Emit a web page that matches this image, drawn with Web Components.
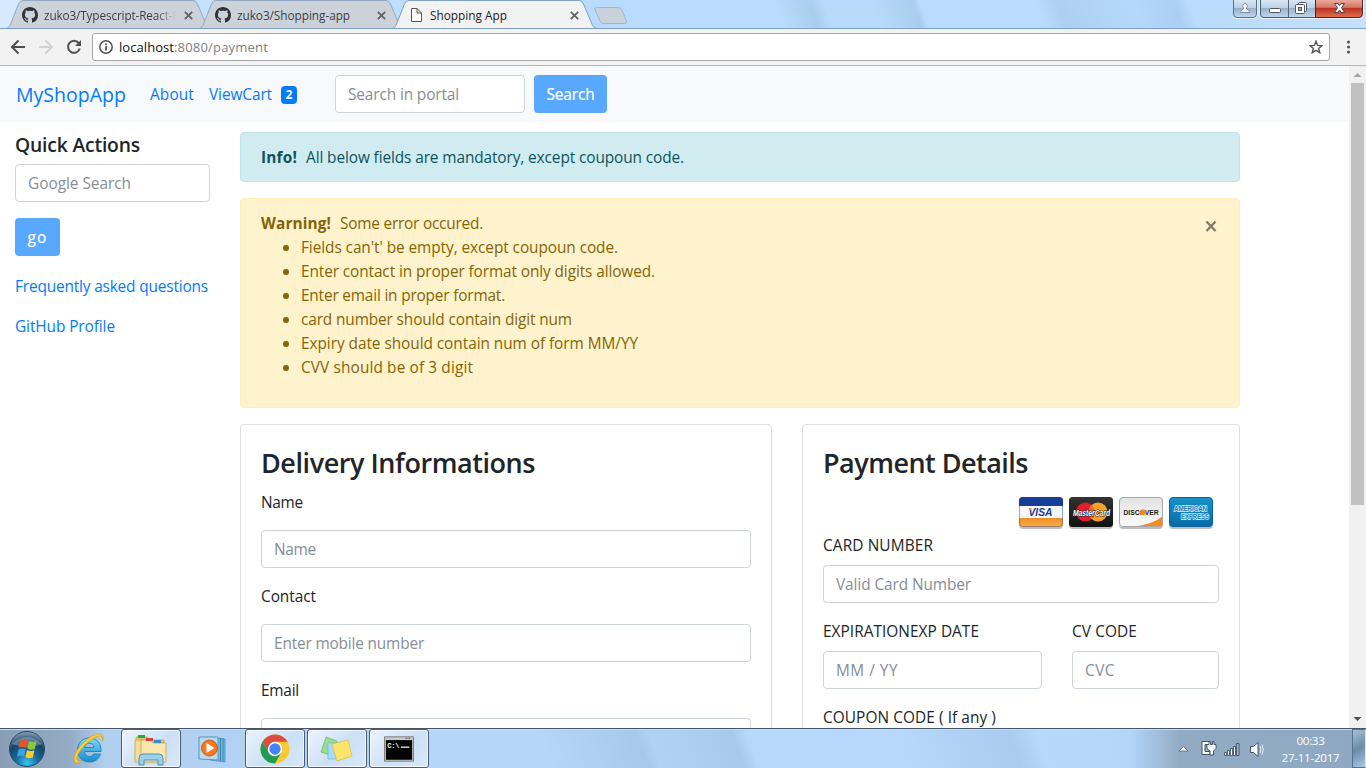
<!DOCTYPE html>
<html lang="en">
<head>
<meta charset="utf-8">
<title>Shopping App</title>
<style>
html,body{margin:0;height:100%;overflow:hidden}
body{font-family:"Open Sans","Noto Sans",sans-serif;font-size:15.400px;line-height:24px;color:#212529;background:#fff}
</style>
</head>
<body>
<desktop-screen></desktop-screen>
<script>
const define = (name, css, html, after) => customElements.define(name, class extends HTMLElement {
  constructor() {
    super();
    this.attachShadow({mode: 'open'}).innerHTML = `<style>*{box-sizing:border-box}:host{box-sizing:border-box;display:block}${css}</style>${html}`;
  }
  connectedCallback() { if (after) after.call(this); }
});

// Text run tracked to a given width in pixels.
define('fit-text', ':host{display:inline-block;white-space:pre}', '<slot></slot>', function () {
  const target = parseFloat(this.getAttribute('w'));
  const n = this.textContent.length;
  if (!target || !n) return;
  const range = document.createRange();
  range.selectNodeContents(this);
  const natural = range.getBoundingClientRect().width;
  if (natural) this.style.letterSpacing = ((target - natural) / n).toFixed(3) + 'px';
});

define('browser-tab', `
:host{position:relative;width:206px;height:28px;flex:none;margin-right:-13px;font-size:11.800px;line-height:28px;color:#3b3f44}
:host([active]){z-index:2;color:#222}
.shape{position:absolute;inset:0}
.row{position:relative;display:flex;align-items:center;height:30px;padding-left:16px}
.label{margin-left:6px;width:133px;overflow:hidden;height:28px}
:host([fade]) .label{-webkit-mask-image:linear-gradient(90deg,#000 112px,transparent 132px)}
.ico{width:16px;height:16px;display:flex}
.x{margin-left:7px}
`, `<svg class="shape" width="206" height="28"><path id="p" d="M3 28"/></svg>
<div class="row"><span class="ico"><slot name="icon"></slot></span><span class="label"><slot></slot></span>
<svg class="x" width="9" height="9" viewBox="0 0 9 9"><path d="M.8.8 8.200 8.200M8.200.8.8 8.200" stroke="#5f6368" stroke-width="1.800"/></svg></div>`, function () {
  const p = this.shadowRoot.getElementById('p');
  const on = this.hasAttribute('active');
  p.setAttribute('d', 'M0.5 28.5C3 27.500 4 26 5 23L12.500 4Q14 .5 17 .5H187Q190 .5 191.500 4L199.500 23C201 26.500 202 28 205.500 28.500');
  p.setAttribute('fill', on ? '#f2f2f2' : '#ccd2d9');
  p.setAttribute('stroke', on ? '#7d9fc4' : '#93a9c2');
});

define('octo-icon', ':host{width:16px;height:16px}', `<svg width="16" height="16" viewBox="0 0 16 16" style="display:block"><path fill="#30343a" d="M8 0C3.580 0 0 3.580 0 8c0 3.540 2.290 6.530 5.470 7.590.4.070.55-.17.55-.38 0-.19-.01-.82-.01-1.490-2.010.37-2.530-.49-2.690-.94-.09-.23-.48-.94-.82-1.130-.28-.15-.68-.52-.01-.53.63-.01 1.080.58 1.230.82.72 1.210 1.870.87 2.330.66.070-.52.28-.87.510-1.070-1.780-.2-3.640-.89-3.640-3.950 0-.87.310-1.590.82-2.150-.08-.2-.36-1.020.080-2.120 0 0 .67-.21 2.200.82.64-.18 1.320-.27 2-.27s1.360.09 2 .27c1.530-1.040 2.200-.82 2.200-.82.44 1.100.16 1.920.08 2.120.51.56.82 1.270.82 2.150 0 3.070-1.870 3.750-3.650 3.950.29.25.54.73.54 1.480 0 1.070-.01 1.930-.01 2.200 0 .21.15.46.55.38A8.010 8.010 0 0 0 16 8c0-4.420-3.580-8-8-8z"/></svg>`);

define('window-buttons', ':host{width:133px;height:28px}', `<svg width="133" height="28" style="display:block">
<defs><linearGradient id="g" x2="0" y2="1"><stop offset="0" stop-color="#dce9f6"/><stop offset=".46" stop-color="#bdd0e3"/><stop offset=".5" stop-color="#98b1ca"/><stop offset="1" stop-color="#c1d8ee"/></linearGradient>
<linearGradient id="r" x2="0" y2="1"><stop offset="0" stop-color="#eab0a2"/><stop offset=".45" stop-color="#d77766"/><stop offset=".5" stop-color="#bd321c"/><stop offset="1" stop-color="#dd7252"/></linearGradient></defs>
<g stroke="#fff" stroke-opacity=".6" fill="none"><path d="M-.5 0V14Q-.5 18.500 3 18.500H20Q24.500 18.500 24.500 14V0M26.500 0V14Q26.500 18.500 31 18.500H126Q130.500 18.500 130.500 14V0"/></g>
<path d="M.5-1V14Q.5 17.500 4 17.500H20Q23.500 17.500 23.500 14V-1z" fill="url(#g)" stroke="#5e7085"/>
<path d="M27.500-1V14Q27.500 17.500 31 17.500H82.500V-1z" fill="url(#g)" stroke="#4c5d72"/>
<path d="M82.500-1V17.500H126Q129.500 17.500 129.500 14V-1z" fill="url(#r)" stroke="#592126"/>
<path d="M55.500 0V17" stroke="#56687c"/>
<path d="M12 3.500a2.500 2.500 0 0 1 1.500 4.300V9q3 .5 3 3.500h-9q0-3 3-3.500V7.800A2.500 2.500 0 0 1 12 3.500z" fill="#fff" stroke="#7b8ea3"/>
<rect x="36.500" y="8.500" width="11" height="4" rx="1" fill="#fff" stroke="#4e5665"/>
<g fill="#fff" stroke="#4e5665"><rect x="65.500" y="2.500" width="8" height="9" rx="1"/><rect x="62.500" y="4.500" width="9" height="9" rx="1"/><rect x="65.500" y="7.500" width="3" height="3" fill="#9cb0c8"/></g>
<path d="M101.500 3.500h3.500l1.500 2.200 1.500-2.200h3.500l-3 4.300 3 4.700H108l-1.500-2.500-1.500 2.500h-3.500l3-4.700z" fill="#fff" stroke="#54404b"/>
</svg>`);

define('tab-strip', `
:host{height:28px;display:flex;padding-left:6px;position:relative;background:linear-gradient(90deg,#d8eaff 0,#c5e0fd 200px,#b9dcfe 580px,#b9dcfe 740px,transparent 765px),linear-gradient(70deg,#b9dcfe 0 57%,#a9cdec 59.500%,#b8dbfc 60.500%,#b8dbfc 64%,#a9cdec 67%,#b8dbfe 67.500%,#b8dbfe 76%,#add0f2 77.500%,#b4d8fb 83%,#abcff3 86%,#b9dbfd 87%,#c8e0fb 100%)}
.plus{margin:7px 0 0 8px}.end{margin-left:auto}
`, `<browser-tab fade><octo-icon slot="icon"></octo-icon><fit-text w="142">zuko3/Typescript-React-Re</fit-text></browser-tab>
<browser-tab><octo-icon slot="icon"></octo-icon><fit-text w="113">zuko3/Shopping-app</fit-text></browser-tab>
<browser-tab active><svg slot="icon" width="16" height="16"><path d="M3.500 1.500H9L13.500 6V14.500H3.500zM9 1.500V6H13.500" fill="#fff" stroke="#555"/></svg><fit-text w="77">Shopping App</fit-text></browser-tab>
<svg class="plus" width="36" height="18"><path d="M3.500.5H25Q28 .5 29 3L33 13Q34.500 16.500 32 16.500H10Q8 16.500 7 14L2 3Q1 .5 3.500.5z" fill="#c9d2da" stroke="#9fb6cc"/></svg>
<window-buttons class="end"></window-buttons>`);

define('address-bar', `
:host{height:38px;display:flex;align-items:center;background:#f2f2f2;border-top:1px solid #7d9fc4;border-bottom:1px solid #b6b6b6;font-size:13px;color:#808080}
.nav{width:92px;flex:none}.box{flex:1;height:28px;display:flex;align-items:center;background:#fff;border:1px solid #a6a6a6;border-radius:3px;padding:0 6px}
.box b{font-weight:400;color:#111}.url{margin-left:6px;display:flex;line-height:26px}.star{margin-left:auto}.menu{width:36px;flex:none}
svg{display:block}
`, `<svg class="nav" width="92" height="28" fill="none" stroke="#4f4f4f" stroke-width="2"><path d="M25 14H12M18.500 7.500 12 14l6.500 6.500"/><path d="M39 14H52M45.500 7.500 52 14l-6.500 6.500" stroke="#d2d2d2"/><path d="M78.700 10A6 6 0 1 0 79.800 15.500"/><path d="M81 7v6h-6z" fill="#4f4f4f" stroke="none"/></svg>
<div class="box"><svg width="14" height="14" fill="none" stroke="#555" stroke-width="1.500"><circle cx="7" cy="7" r="6.200"/><path d="M7 6.200V10.500M7 3.500V5.200" stroke-width="1.800"/></svg>
<div class="url"><b><fit-text w="55">localhost</fit-text></b><fit-text w="94">:8080/payment</fit-text></div>
<svg class="star" width="14" height="14"><path d="M7 1.200 8.600 5.400 13 5.600 9.600 8.400 10.800 12.700 7 10.300 3.200 12.700 4.400 8.400 1 5.600 5.400 5.400z" fill="none" stroke="#555" stroke-width="1.400"/></svg></div>
<svg class="menu" width="36" height="28" fill="#555"><circle cx="18.500" cy="9" r="1.600"/><circle cx="18.500" cy="14" r="1.600"/><circle cx="18.500" cy="19" r="1.600"/></svg>`);

define('text-field', `:host{height:38px;border:1px solid #ced4da;border-radius:4px;padding:7px 12px 0;background:#fff;color:#868e96}`, '<slot></slot>');
define('action-button', `:host{display:inline-block;height:38px;border-radius:4px;background:#59a8ff;color:#fff;padding:8px 12.500px 0;-webkit-text-stroke:.2px #fff}`, '<slot></slot>');

define('shop-navbar', `
:host{height:56px;background:#f8f9fa;display:flex;align-items:center;padding-left:16px;color:#007bff}
.brand{font-size:19.500px;width:134px;padding-top:1px}.about{width:59px;padding-top:2px}.cart{width:72px;padding-top:2px}
.badge{width:16px;height:18px;margin-top:1px;border-radius:4px;background:#007bff;color:#fff;font-size:12px;font-weight:700;line-height:18px;text-align:center}
text-field{width:190px;margin:0 9px 0 38px}
`, `<span class="brand"><fit-text w="110">MyShopApp</fit-text></span><span class="about"><fit-text w="44">About</fit-text></span><span class="cart"><fit-text w="63">ViewCart</fit-text></span><span class="badge">2</span>
<text-field><fit-text w="111">Search in portal</fit-text></text-field><action-button><fit-text w="48">Search</fit-text></action-button>`);

define('quick-actions', `
:host{width:210px;flex:none;padding:11px 0 0 15px}
h4{margin:0 0 7px;font-size:19.300px;font-weight:600;line-height:24px}
action-button{margin-top:16px}
a{display:block;color:#007bff;height:24px;margin-top:16px;padding-top:1px}a.first{margin-top:18px}
.go{height:54px;display:flex}
`, `<h4><fit-text w="125">Quick Actions</fit-text></h4><text-field><fit-text w="103">Google Search</fit-text></text-field>
<div class="go"><action-button><fit-text w="20">go</fit-text></action-button></div>
<a class="first"><fit-text w="193">Frequently asked questions</fit-text></a><a><fit-text w="100">GitHub Profile</fit-text></a>`);

define('alert-box', `
:host{padding:13px 20px 0;border:1px solid;border-radius:4px;margin-bottom:16px;position:relative}
:host([kind=info]){height:50px;color:#0c5460;background:#d1ecf1;border-color:#bee5eb}
:host([kind=warning]){height:210px;color:#856404;background:#fff3cd;border-color:#ffeeba}
svg{position:absolute;right:22px;top:21px;display:none}:host([closable]) svg{display:block}
`, `<slot></slot><svg width="13" height="13"><path d="M2.500 1.500l9 9.500M11.500 1.500l-9 9.500" stroke="#807a67" stroke-width="2.400"/></svg>`);

define('error-list', ':host{margin-top:-1px}ul{margin:0;padding-left:40px}li{height:24px}li::marker{font-size:16px}', `<ul><li><fit-text w="317">Fields can't' be empty, except coupoun code.</fit-text></li><li><fit-text w="354">Enter contact in proper format only digits allowed.</fit-text></li><li><fit-text w="204">Enter email in proper format.</fit-text></li><li><fit-text w="271">card number should contain digit num</fit-text></li><li><fit-text w="337">Expiry date should contain num of form MM/YY</fit-text></li><li><fit-text w="172">CVV should be of 3 digit</fit-text></li></ul>`);

define('panel-card', `:host{border:1px solid #dfdfdf;border-radius:4px;height:600px;padding:20px;background:#fff}
.h{font-size:27px;font-weight:600;line-height:36px}`, `<div class="h"><slot name="title"></slot></div><slot></slot>`);

define('delivery-form', `label{display:block;height:24px;padding-top:1px;margin:0 0 16px}text-field{margin-bottom:16px}:host{padding-top:9px}`,
`<label><fit-text w="42">Name</fit-text></label><text-field><fit-text w="42">Name</fit-text></text-field>
<label><fit-text w="55">Contact</fit-text></label><text-field><fit-text w="150">Enter mobile number</fit-text></text-field>
<label><fit-text w="38">Email</fit-text></label><text-field></text-field>`);

define('card-brands', ':host{height:38px;width:201px}', `<svg width="200" height="38" font-family="Liberation Sans" style="display:block">
<defs><linearGradient id="o" x2="0" y2="1"><stop stop-color="#ee8d25"/><stop offset="1" stop-color="#fbb04a"/></linearGradient><linearGradient id="k" x2="0" y2="1"><stop stop-color="#333"/><stop offset="1" stop-color="#111"/></linearGradient><linearGradient id="w" x2="0" y2="1"><stop stop-color="#e2e2e2"/><stop offset="1" stop-color="#fbfbfb"/></linearGradient><linearGradient id="b" x2="0" y2="1"><stop stop-color="#1793c9"/><stop offset="1" stop-color="#0a69a8"/></linearGradient>
<clipPath id="c"><rect width="44" height="30" rx="3.500"/></clipPath></defs>
<g fill="#000" opacity=".25"><rect x="1" y="3" width="44" height="30" rx="4"/><rect x="51" y="3" width="44" height="30" rx="4"/><rect x="101" y="3" width="44" height="30" rx="4"/><rect x="151" y="3" width="44" height="30" rx="4"/></g>
<g transform="translate(1 1)"><g clip-path="url(#c)"><rect width="44" height="30" fill="#f7f7fb"/><rect width="44" height="9" fill="#173f97"/><rect y="21" width="44" height="9" fill="url(#o)"/></g><rect x=".5" y=".5" width="43" height="29" rx="3.500" fill="none" stroke="#173f97" stroke-opacity=".45"/><text x="9.500" y="18.800" font-size="10.500" font-weight="700" font-style="italic" fill="#1b3b94" textLength="24" lengthAdjust="spacingAndGlyphs">VISA</text><path d="M9 11.300h3l1 3z" fill="#f4a32d"/></g>
<g transform="translate(51 1)"><rect width="44" height="30" rx="3.500" fill="url(#k)"/><circle cx="16.500" cy="15" r="9.500" fill="#df1f2d"/><circle cx="29" cy="15" r="9.500" fill="#f9a12c"/><path d="M22.700 7.900a9.500 9.500 0 0 1 0 14.200 9.500 9.500 0 0 1 0-14.200z" fill="#ec6b2a"/><text x="4" y="18.500" font-size="8.500" font-weight="700" font-style="italic" fill="#fff" stroke="#222" stroke-width="1.200" paint-order="stroke" textLength="37" lengthAdjust="spacingAndGlyphs">MasterCard</text></g>
<g transform="translate(101 1)"><g clip-path="url(#c)"><rect width="44" height="30" fill="url(#w)"/><path d="M13 30Q35 27 44 19V30z" fill="#f58a1f"/></g><rect x=".5" y=".5" width="43" height="29" rx="3.500" fill="none" stroke="#a8a8a8"/><text x="4.500" y="18" font-size="8" font-weight="700" fill="#222" textLength="35" lengthAdjust="spacingAndGlyphs">DISCOVER</text><circle cx="24" cy="15.200" r="3" fill="#f58a1f"/></g>
<g transform="translate(151 1)"><rect x=".5" y=".5" width="43" height="29" rx="3.500" fill="url(#b)" stroke="#07629b"/><g font-size="6.800" font-weight="700" fill="#1679b4" stroke="#d9f0fb" stroke-width="1.300" paint-order="stroke"><text x="5" y="13.500" textLength="33" lengthAdjust="spacingAndGlyphs">AMERICAN</text><text x="12" y="21.500" textLength="28" lengthAdjust="spacingAndGlyphs">EXPRESS</text></g></g>
</svg>`);

define('payment-form', `:host{padding-top:15px}card-brands{margin:0 0 -1px auto}label{display:block;height:24px;padding-top:1px;margin:0 0 8px}text-field{margin-bottom:16px}.two{display:grid;grid-template-columns:219px 147px;gap:30px}`,
`<card-brands></card-brands><label><fit-text w="110">CARD NUMBER</fit-text></label><text-field><fit-text w="135">Valid Card Number</fit-text></text-field>
<div class="two"><div><label><fit-text w="156">EXPIRATIONEXP DATE</fit-text></label><text-field><fit-text w="62">MM / YY</fit-text></text-field></div><div><label><fit-text w="65">CV CODE</fit-text></label><text-field><fit-text w="30">CVC</fit-text></text-field></div></div>
<label><fit-text w="173">COUPON CODE ( If any )</fit-text></label>`);

define('page-scrollbar', `:host{width:17px;background:#f1f1f1;display:flex;flex-direction:column;align-items:center}
.t{width:13px;height:422px;background:#c1c1c1}.d{margin-top:auto}svg{display:block}`,
`<svg width="17" height="17"><path d="M4.500 11 8.500 7l4 4z" fill="#a3a3a3"/></svg><div class="t"></div><svg class="d" width="17" height="17"><path d="M4.500 6h8l-4 4z" fill="#505050"/></svg>`);

define('shop-page', `
:host{height:662px;display:flex;overflow:hidden}
.page{flex:1;min-width:0}.body{display:flex;gap:30px}
.main{width:1000px;padding-top:10px}.cards{display:grid;grid-template-columns:532px 438px;gap:30px}
b{margin-right:9px}
`, `<div class="page"><shop-navbar></shop-navbar><div class="body"><quick-actions></quick-actions><div class="main">
<alert-box kind="info"><b><fit-text w="36">Info!</fit-text></b><fit-text w="378">All below fields are mandatory, except coupoun code.</fit-text></alert-box>
<alert-box kind="warning" closable><b><fit-text w="70">Warning!</fit-text></b><fit-text w="143">Some error occured.</fit-text><error-list></error-list></alert-box>
<div class="cards"><panel-card><fit-text slot="title" w="274">Delivery Informations</fit-text><delivery-form></delivery-form></panel-card><panel-card><fit-text slot="title" w="205">Payment Details</fit-text><payment-form></payment-form></panel-card></div>
</div></div></div><page-scrollbar></page-scrollbar>`);

define('task-button', `:host{width:60px;height:39px;display:flex;align-items:center;justify-content:center;border:1px solid transparent;border-radius:3px}
:host([open]){border-color:#4a5d74;background:linear-gradient(135deg,#f0f6fdee,#cfe2f6dd 55%,#dcebfbdd);box-shadow:inset 0 0 0 1px #ffffffb0}`, '<slot></slot>');

define('system-tray', `:host{display:flex;align-items:center;height:39px;color:#fff;font-size:11.600px;line-height:17px}
.clock{width:84px;padding-left:1px;display:flex;flex-direction:column;align-items:center}
.show{width:14px;height:39px;border:1px solid #55728f;border-right-color:#dcecfb;background:linear-gradient(150deg,#a9bfd5,#6d8ba8 50%,#a9c9e8)}`,
`<svg width="95" height="39"><path d="M6 22l4.500-4.500 4.500 4.500z" fill="#fff" stroke="#52677d" stroke-width=".8"/>
<g fill="#fff" stroke="#33475c" stroke-width=".9"><path d="M37 12.500h-8v13h8v-3h-5v-7h5z"/><path d="M34 15.500h2v-3h1.500v3h2v-3H41v3h2v4l-2.500 2.500v4H37v-4l-3-2.500z"/></g>
<g fill="#fff" stroke="#33475c" stroke-width=".8"><path d="M51.500 23.500h2v3h-2zM54.500 21.500h2v5h-2zM57.500 19.500h2v7h-2zM60.500 17.500h2v9h-2z"/><path d="M63.500 14.500h2.500v12h-2.500z" fill="#a5b9cc"/></g>
<path d="M77.500 17.500h3l4.500-4v14l-4.500-4h-3z" fill="#fff" stroke="#33475c" stroke-width=".9"/><path d="M87 17q2 3.500 0 7M89 15.500q2.600 5 0 10" fill="none" stroke="#e8f1fa"/></svg>
<div class="clock"><fit-text w="28">00:33</fit-text><fit-text w="58">27-11-2017</fit-text></div><div class="show"></div>`);

define('task-bar', `
:host{height:40px;display:flex;border-top:1px solid #45566b;box-shadow:inset 0 1px #c5dcf2;background:linear-gradient(90deg,#899eb6 0,#93abc5 70px,#b1cfee 105px,#b5d6f9 430px,transparent 500px,transparent 1130px,#92abc4 1180px,#8ea8c3 1366px),linear-gradient(70deg,#b5d6f9 0 40%,#a6c8ea 47%,#b0d2f5 48%,#a7c9ec 54%,#b6d8fb 55%,#b6d8fb 66%,#a8cbee 74%,#b6d8fb 76%,#abcff2 100%)}
svg{display:block}system-tray{margin-left:auto}.start{width:60px;margin-right:-1px}.gap{margin-right:2px}.ie{margin-right:2px}.wmp{margin-right:2px}
`, `<task-button class="start"><svg width="40" height="38" viewBox="0 0 40 38" style="margin-left:-6px"><defs><radialGradient id="s" cy=".9" r=".95"><stop stop-color="#36c6ef"/><stop offset=".35" stop-color="#176898"/><stop offset=".65" stop-color="#174363"/><stop offset="1" stop-color="#9db6ca"/></radialGradient></defs>
<circle cx="20" cy="19" r="17.500" fill="url(#s)" stroke="#2a4864"/><path d="M5 14Q20 0 35 14Q20 20 5 14z" fill="#d9e8f2" opacity=".3"/>
<path d="M13.500 10.500q3-2 7 0L19 18q-4-1.800-7.200 0z" fill="#e9532a"/><path d="M21.800 11q4 2 7.700.3L27.800 19q-4 1.500-7.500-.4z" fill="#8dc63f"/><path d="M11.500 19.500q3.500-2 7.200-.2L17 26.500q-3.500-1.600-7 .3z" fill="#3fa2e0"/><path d="M20 20q4 2 7.500.3L25.800 27.500q-3.800 1.700-7.300-.2z" fill="#fdca30"/></svg></task-button>
<task-button class="ie"><svg width="32" height="34" viewBox="0 0 32 34"><defs><linearGradient id="e" x2="0" y2="1"><stop stop-color="#7ad8fa"/><stop offset="1" stop-color="#168bd0"/></linearGradient></defs><path d="M16 6C9 6 4.500 11.500 4.500 18S9 30 16.500 30c5.500 0 9.500-3 11-8h-7c-.8 1.800-2 2.500-4 2.500-3 0-5-2-5-5H28C28.500 11.500 24 6 16 6zM11.600 15.500c.4-2.800 2-4.300 4.700-4.300s4.300 1.500 4.600 4.300z" fill="url(#e)" stroke="#1679ba" stroke-width=".8"/><path d="M29.500 9C30.500 4.500 28 3 23.500 5 14 9.500 5 19 4 26 3.700 29 5.500 29.800 9 28 5.500 32 1 32 1 27.500 1 19 12 6.500 22 2.700 28.500.5 32 3 29.500 9z" fill="#f8cf35" stroke="#d19a18" stroke-width=".6"/></svg></task-button>
<task-button open class="gap"><svg width="36" height="34" viewBox="0 0 36 34"><g stroke="#c9a24d" stroke-width=".8"><path d="M3 5h11l2 3h15v20H3z" fill="#e7c56c"/><path d="M2 8h11l2 3h16v19H2z" fill="#f4dc91"/><path d="M8 8h10l2 3h13v19H8z" fill="#f9e8ad"/></g><g><path d="M5 3h7v3H5z" fill="#27a84b"/><path d="M13 6h7v3h-7z" fill="#dc4038"/><path d="M21 8h7v3h-7z" fill="#348bd0"/></g><path d="M6 33V26q0-4 4-4h16q4 0 4 4v7h-5v-5H11v5z" fill="#9bd0ed" stroke="#4d93bb"/></svg></task-button>
<task-button class="wmp"><svg width="30" height="28" viewBox="0 0 30 28"><path d="M12 2 27 4V27L12 25z" fill="#77b9dc" stroke="#3d87b5" stroke-width=".7"/><path d="M1 2H20V25L1 24z" fill="#b9daef" stroke="#5299c5"/><path d="M22.500 3V26M25 3.500V26" stroke="#3985b4"/><circle cx="11.500" cy="13" r="8" fill="#f37a20" stroke="#d95d10"/><path d="M8.500 8l8 5-8 5z" fill="#fff"/></svg></task-button>
<task-button open class="gap"><svg width="30" height="30" viewBox="0 0 30 30"><circle cx="15" cy="15" r="14.500" fill="#fbc934"/><path d="M15 7.700h12.600A14.500 14.500 0 0 0 2.500 7.700L8.700 18.500z" fill="#de4b3f"/><path d="M2.500 7.700 8.700 18.600Q11 22.500 15.500 22.200L21.300 18.600 15 29.500A14.500 14.500 0 0 1 2.500 7.700z" fill="#1d9b57"/><circle cx="15" cy="15" r="7.200" fill="#fff"/><circle cx="15" cy="15" r="5.700" fill="#4285f4"/></svg></task-button>
<task-button open class="gap"><svg width="34" height="28" viewBox="0 0 34 28"><path d="M6 2 17 6 13 21 1 17z" fill="#98dd91" stroke="#67b766" stroke-width=".7"/><path d="M8 8H22V24H8z" fill="#a7daf8" stroke="#6eb4de" stroke-width=".7"/><path d="M12 9 28 5 32 21 17 26z" fill="#fce56a" stroke="#d9b83c" stroke-width=".7"/></svg></task-button>
<task-button open><svg width="30" height="26" viewBox="0 0 32 27"><path d="M.5.5h31v26H.5z" fill="#c9c9c9" stroke="#777"/><path d="M2 4h28v21H2z" fill="#050505"/><path d="M23 2h2m1 0h2" stroke="#555"/><text x="3.500" y="12" font-family="Liberation Mono" font-size="7.500" font-weight="700" fill="#fff" textLength="13">C:\\</text><path d="M18 11.500h9" stroke="#fff" stroke-width="1.300"/></svg></task-button>
<system-tray></system-tray>`);

define('desktop-screen', ':host{width:1366px;height:768px;overflow:hidden;display:flex;flex-direction:column}', '<tab-strip></tab-strip><address-bar></address-bar><shop-page></shop-page><task-bar></task-bar>');
</script>
</body>
</html>
